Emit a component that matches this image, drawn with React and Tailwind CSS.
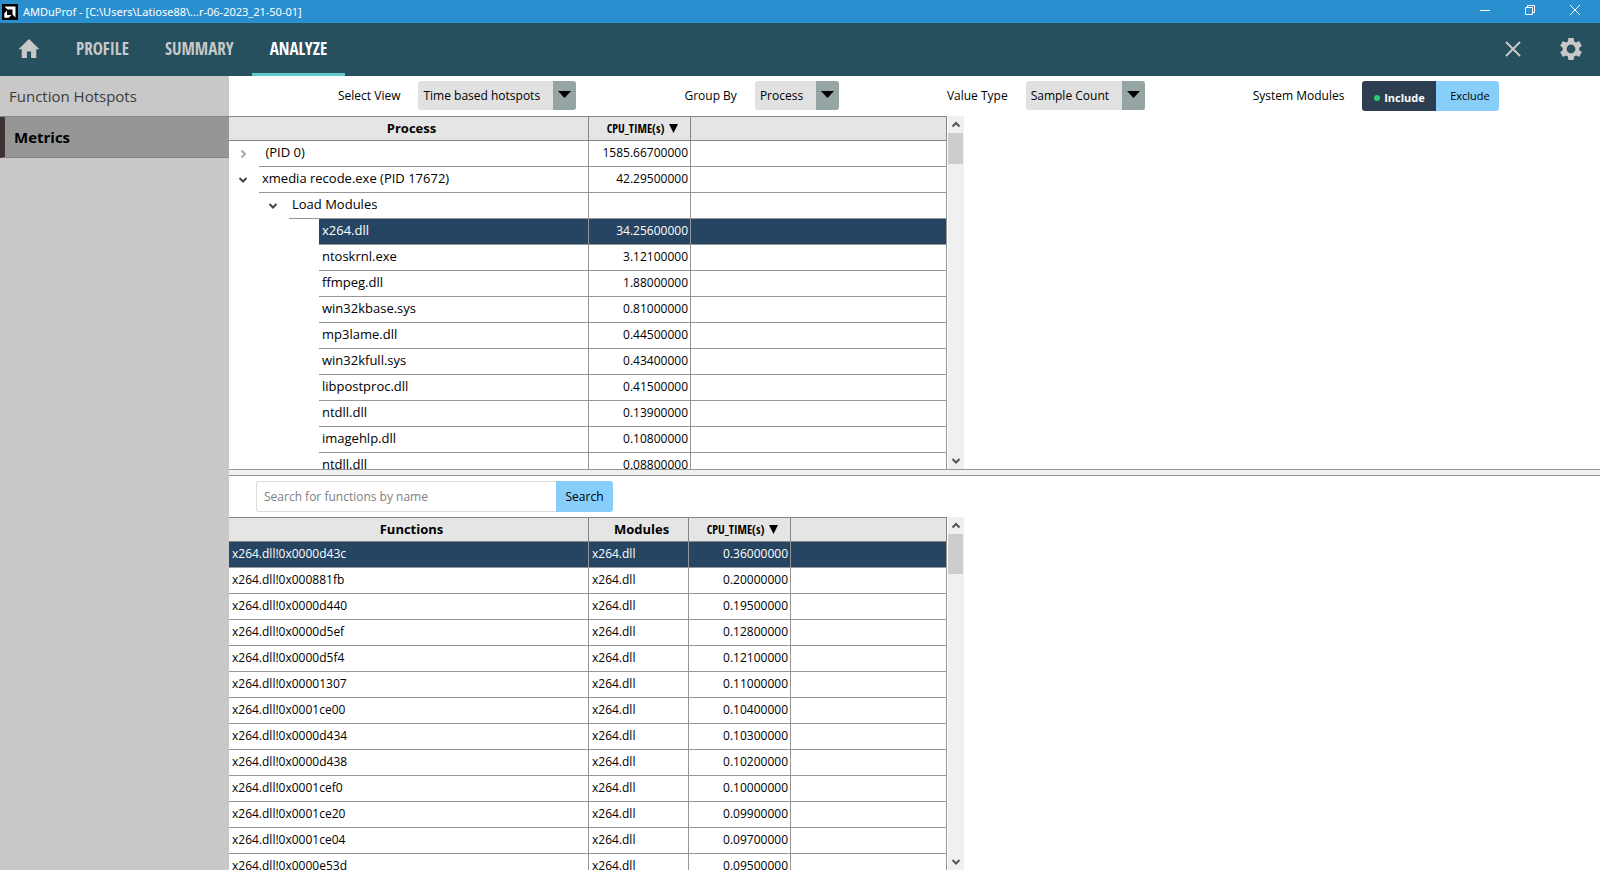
import { useState } from "react";

const PROCESS_ROWS = [
  { id: "p0", level: 0, state: "closed", name: " (PID 0)", time: "1585.66700000" },
  { id: "p1", level: 0, state: "open", name: "xmedia recode.exe (PID 17672)", time: "42.29500000" },
  { id: "lm", level: 1, state: "open", name: "Load Modules", time: "" },
  { id: "m0", level: 2, name: "x264.dll", time: "34.25600000" },
  { id: "m1", level: 2, name: "ntoskrnl.exe", time: "3.12100000" },
  { id: "m2", level: 2, name: "ffmpeg.dll", time: "1.88000000" },
  { id: "m3", level: 2, name: "win32kbase.sys", time: "0.81000000" },
  { id: "m4", level: 2, name: "mp3lame.dll", time: "0.44500000" },
  { id: "m5", level: 2, name: "win32kfull.sys", time: "0.43400000" },
  { id: "m6", level: 2, name: "libpostproc.dll", time: "0.41500000" },
  { id: "m7", level: 2, name: "ntdll.dll", time: "0.13900000" },
  { id: "m8", level: 2, name: "imagehlp.dll", time: "0.10800000" },
  { id: "m9", level: 2, name: "ntdll.dll", time: "0.08800000" },
];

const FUNCTION_ROWS = [
  { name: "x264.dll!0x0000d43c", time: "0.36000000" },
  { name: "x264.dll!0x000881fb", time: "0.20000000" },
  { name: "x264.dll!0x0000d440", time: "0.19500000" },
  { name: "x264.dll!0x0000d5ef", time: "0.12800000" },
  { name: "x264.dll!0x0000d5f4", time: "0.12100000" },
  { name: "x264.dll!0x00001307", time: "0.11000000" },
  { name: "x264.dll!0x0001ce00", time: "0.10400000" },
  { name: "x264.dll!0x0000d434", time: "0.10300000" },
  { name: "x264.dll!0x0000d438", time: "0.10200000" },
  { name: "x264.dll!0x0001cef0", time: "0.10000000" },
  { name: "x264.dll!0x0001ce20", time: "0.09900000" },
  { name: "x264.dll!0x0001ce04", time: "0.09700000" },
  { name: "x264.dll!0x0000e53d", time: "0.09500000" },
];

const TABS = ["PROFILE", "SUMMARY", "ANALYZE"];

const INDENT = ["pl-[30px]", "pl-[60px]", "pl-[90px]"];

const CONDENSED = "font-['Open_Sans_Condensed','Liberation_Sans_Narrow','Open_Sans',sans-serif]";

function Chevron({ dir, className = "" }) {
  const d = { up: "M1.5 6.5 5 3l3.5 3.5", down: "M1.5 3 5 6.5 8.500 3", right: "M3.5 1.5 7 5 3.5 8.5" }[dir];
  return (
    <svg viewBox="0 0 10 10" className={`w-[10px] h-[10px] ${className}`} fill="none" stroke="currentColor" strokeWidth="2">
      <path d={d} />
    </svg>
  );
}

function Scrollbar({ thumb }) {
  return (
    <div className="ml-px w-4 shrink-0 bg-[#f0f0f0] flex flex-col items-center text-[#555]">
      <button aria-label="Scroll up" className="h-[17px] w-full pr-px flex items-center justify-center">
        <Chevron dir="up" />
      </button>
      <div className={`w-[15px] mr-px bg-[#cdcdcd] ${thumb}`} />
      <button aria-label="Scroll down" className="mt-auto h-[17px] w-full pr-px flex items-center justify-center">
        <Chevron dir="down" />
      </button>
    </div>
  );
}

function HeadCell({ children, sorted }) {
  return (
    <th
      scope="col"
      className={`h-[25px] p-0 pl-[6px] border-t border-b border-r border-[#858585] bg-[#e5e5e5] text-center align-middle font-bold ${
        sorted ? `${CONDENSED} text-[12px] leading-[20px]` : "pb-[2px] text-[13px] leading-[20px]"
      }`}
    >
      {children}
    </th>
  );
}

function SortedLabel() {
  return (
    <button className="inline-flex items-center gap-[5px] font-bold">
      CPU_TIME(s)
      <svg viewBox="0 0 9 9" className="w-[9px] h-[9px]"><path d="M0 0h9L4.500 9z" /></svg>
    </button>
  );
}

function Dropdown({ id, label, value, width }) {
  return (
    <div className="flex items-center gap-[18px]">
      <label htmlFor={id}>{label}</label>
      <div className={`relative h-[29px] ${width}`}>
        <select id={id} className="appearance-none w-full h-full pl-[5px] pt-px rounded-[3px] bg-[#e1e1e1] outline-none">
          <option>{value}</option>
        </select>
        <span className="absolute right-0 inset-y-0 w-[23px] rounded-r-[3px] bg-[#95a5a4] flex items-center justify-center pb-[2px] pointer-events-none">
          <svg viewBox="0 0 13 7" className="w-[13px] h-[7px]"><path d="M0 0h13L6.500 7z" /></svg>
        </span>
      </div>
    </div>
  );
}

function TitleBar() {
  return (
    <header className="h-[23px] shrink-0 bg-[#2a8fce] text-white flex items-center">
      <svg viewBox="0 0 16 16" className="ml-[2px] w-4 h-4">
        <rect width="16" height="16" fill="#000" />
        <path d="M2.500 2.500h11v11l-3-3v-5h-5z" fill="#fff" />
        <path d="M5 6.500v4.500h4.500l-2.700 2.700H2.300V9.200z" fill="#fff" />
      </svg>
      <h1 className="ml-[5px] text-[11px] leading-[20px] font-['Noto_Sans','Open_Sans',sans-serif]">AMDuProf - [C:\Users\Latiose88\...r-06-2023_21-50-01]</h1>
      <div className="ml-auto mr-[2px] flex items-center h-full pb-[3px]">
        <button aria-label="Minimize" className="w-[45px] flex justify-center">
          <svg viewBox="0 0 10 10" className="w-[10px] h-[10px]" stroke="#fff"><path d="M0 5.500h10" /></svg>
        </button>
        <button aria-label="Restore" className="w-[45px] flex justify-center">
          <svg viewBox="0 0 10 10" className="w-[10px] h-[10px]" stroke="#fff" fill="none">
            <path d="M.5 2.500h7v7h-7zM2.500 2.500v-2h7v7h-2" />
          </svg>
        </button>
        <button aria-label="Close window" className="w-[46px] flex justify-center">
          <svg viewBox="0 0 10 10" className="w-[10px] h-[10px]" stroke="#fff"><path d="M0 0l10 10M10 0L0 10" /></svg>
        </button>
      </div>
    </header>
  );
}

function NavBar() {
  return (
    <nav className="h-[53px] shrink-0 bg-[#26505e] text-[#c8c8c8] flex items-stretch">
      <button aria-label="Home" className="w-[58px] pb-[2px] flex items-center justify-center">
        <svg viewBox="0 0 22 19" className="w-[22px] h-[19px]" fill="currentColor">
          <path d="M11 0 21.500 10.200h-3.200V19h-5.200v-6.500H8.900V19H3.700v-8.800H.5z" />
        </svg>
      </button>
      {TABS.map((t) => (
        <a
          key={t}
          href={`#${t.toLowerCase()}`}
          className={`px-[18px] pt-px flex items-center border-b-[3px] text-[17px] font-bold ${CONDENSED} ${
            t === "ANALYZE" ? "text-white border-[#5fc9cc]" : "border-transparent"
          }`}
        >
          {t}
        </a>
      ))}
      <div className="ml-auto pb-[2px] flex items-center">
        <button aria-label="Close session" className="w-[58px] flex justify-center">
          <svg viewBox="0 0 16 16" className="w-4 h-4" stroke="currentColor" strokeWidth="2"><path d="M1 1l14 14M15 1L1 15" /></svg>
        </button>
        <button aria-label="Settings" className="w-[58px] flex justify-center">
          <svg viewBox="2 2 20 20" className="w-[22px] h-[22px]" fill="currentColor">
            <path d="M19.430 12.980c.04-.32.07-.64.07-.98s-.03-.66-.07-.98l2.110-1.650c.19-.15.24-.42.12-.64l-2-3.460c-.12-.22-.39-.3-.61-.22l-2.490 1c-.52-.4-1.080-.73-1.690-.98l-.38-2.650C14.460 2.180 14.250 2 14 2h-4c-.25 0-.46.18-.49.42l-.38 2.650c-.61.25-1.170.59-1.690.98l-2.490-1c-.23-.09-.49 0-.61.22l-2 3.460c-.13.22-.07.49.12.64l2.110 1.650c-.04.32-.07.65-.07.98s.03.66.07.98l-2.110 1.650c-.19.15-.24.42-.12.64l2 3.460c.12.22.39.3.61.22l2.490-1c.52.4 1.080.73 1.690.98l.38 2.650c.03.24.24.42.49.42h4c.25 0 .46-.18.49-.42l.38-2.650c.61-.25 1.170-.59 1.690-.98l2.490 1c.23.09.49 0 .61-.22l2-3.460c.12-.22.07-.49-.12-.64l-2.110-1.650zM12 16a4 4 0 1 1 0-8 4 4 0 0 1 0 8z" />
          </svg>
        </button>
      </div>
    </nav>
  );
}

function ProcessTable() {
  const [selected, setSelected] = useState("m0");

  return (
    <table className="w-full table-fixed border-separate border-spacing-0">
      <colgroup>
        <col className="w-[360px]" />
        <col className="w-[102px]" />
        <col />
      </colgroup>
      <thead>
        <tr>
          <HeadCell>Process</HeadCell>
          <HeadCell sorted><SortedLabel /></HeadCell>
          <HeadCell />
        </tr>
      </thead>
      <tbody>
        {PROCESS_ROWS.map((r) => {
          const active = r.id === selected;
          const fill = active ? "bg-[#254563] text-white" : "";
          return (
            <tr key={r.id} onClick={() => setSelected(r.id)}>
              <td className={`p-0 border-r border-[#969696] ${INDENT[r.level]}`}>
                <div className={`relative h-[26px] pl-[3px] pb-[3px] flex items-center border-b border-[#969696] whitespace-pre ${fill}`}>
                  {r.state && (
                    <button aria-label="Toggle row" className="absolute -left-[21px] top-[8px]">
                      <Chevron
                        dir={r.state === "open" ? "down" : "right"}
                        className={r.state === "open" ? "text-[#444]" : "text-[#aaa]"}
                      />
                    </button>
                  )}
                  {r.name}
                </div>
              </td>
              <td className={`h-[26px] p-0 pr-[2px] pb-px text-[12px] leading-[20px] text-right border-r border-b border-[#969696] ${fill}`}>{r.time}</td>
              <td className={`p-0 border-r border-b border-[#969696] ${fill}`} />
            </tr>
          );
        })}
      </tbody>
    </table>
  );
}

function FunctionTable() {
  const [selected, setSelected] = useState(0);

  return (
    <table className="w-full table-fixed border-separate border-spacing-0 text-[12px] leading-[20px]">
      <colgroup>
        <col className="w-[360px]" />
        <col className="w-[100px]" />
        <col className="w-[102px]" />
        <col />
      </colgroup>
      <thead>
        <tr>
          <HeadCell>Functions</HeadCell>
          <HeadCell>Modules</HeadCell>
          <HeadCell sorted><SortedLabel /></HeadCell>
          <HeadCell />
        </tr>
      </thead>
      <tbody>
        {FUNCTION_ROWS.map((r, i) => (
          <tr
            key={r.name}
            onClick={() => setSelected(i)}
            className={i === selected ? "bg-[#254563] text-white" : ""}
          >
            <td className="h-[26px] p-0 pl-[3px] pb-px border-r border-b border-[#969696]">{r.name}</td>
            <td className="p-0 pl-[3px] pb-px border-r border-b border-[#969696]">x264.dll</td>
            <td className="p-0 pr-[2px] pb-px text-right border-r border-b border-[#969696]">{r.time}</td>
            <td className="p-0 border-r border-b border-[#969696]" />
          </tr>
        ))}
      </tbody>
    </table>
  );
}

export default function App() {
  const [query, setQuery] = useState("");

  return (
    <div className="h-screen flex flex-col overflow-hidden bg-white text-black text-[13px] leading-[20px] font-['Open_Sans','Noto_Sans',sans-serif]">
      <TitleBar />
      <NavBar />

      <div className="flex-1 min-h-0 flex">
        {/* Sidebar */}
        <aside className="w-[229px] shrink-0 bg-[#c8c8c8] text-[15px]">
          <a href="#hotspots" className="h-[41px] pl-[9px] flex items-center border-b border-[#858585] text-[#3c3c3c]">
            Function Hotspots
          </a>
          <a href="#metrics" className="h-[41px] pl-[9px] flex items-center border-b border-[#858585] border-l-[5px] border-l-[#3f3434] bg-[#969696] font-bold">
            Metrics
          </a>
        </aside>

        <main className="flex-1 min-w-0 flex flex-col">
          {/* Filters + process tree */}
          <section className="h-[calc(50%-4px)] shrink-0 flex flex-col">
            <div className="h-10 shrink-0 pl-[109px] pb-px flex items-center gap-[108px] whitespace-nowrap text-[12px]">
              <Dropdown id="view" label="Select View" value="Time based hotspots" width="w-[158px]" />
              <Dropdown id="group" label="Group By" value="Process" width="w-[84px]" />
              <Dropdown id="value" label="Value Type" value="Sample Count" width="w-[119px]" />
              <div className="flex items-center gap-[18px]">
                <span>System Modules</span>
                <div className="flex h-[30px] text-[11px]">
                  <button className="w-[74px] pt-[4px] rounded-l-[3px] bg-[#2c3e50] text-white font-bold flex items-center justify-center gap-[4px]">
                    <span className="w-[6px] h-[6px] rounded-full bg-[#2ecc71]" />
                    Include
                  </button>
                  <button className="w-[63px] pl-[4px] rounded-r-[3px] bg-[#87cefa]">Exclude</button>
                </div>
              </div>
            </div>
            <div className="flex-1 min-h-0 w-[735px] max-w-full flex">
              <div className="flex-1 min-w-0 overflow-hidden">
                <ProcessTable />
              </div>
              <Scrollbar thumb="h-[31px]" />
            </div>
          </section>

          {/* Splitter */}
          <div className="h-[7px] shrink-0 bg-[#f0f0f0] border-y border-[#969696]" />

          {/* Functions */}
          <section className="flex-1 min-h-0 flex flex-col">
            <form className="h-[41px] shrink-0 pl-[27px] pt-[5px] flex items-start text-[12px]" onSubmit={(e) => e.preventDefault()}>
              <input
                type="text"
                aria-label="Search for functions by name"
                placeholder="Search for functions by name"
                value={query}
                onChange={(e) => setQuery(e.target.value)}
                className="w-[300px] h-[31px] px-[7px] border border-r-0 border-[#dcdcdc] rounded-l-[3px] outline-none placeholder:text-[#808080]"
              />
              <button className="w-[57px] h-[31px] rounded-r-[3px] bg-[#87cefa]">Search</button>
            </form>
            <div className="flex-1 min-h-0 w-[735px] max-w-full flex">
              <div className="flex-1 min-w-0 overflow-hidden">
                <FunctionTable />
              </div>
              <Scrollbar thumb="h-10" />
            </div>
          </section>
        </main>
      </div>
    </div>
  );
}
